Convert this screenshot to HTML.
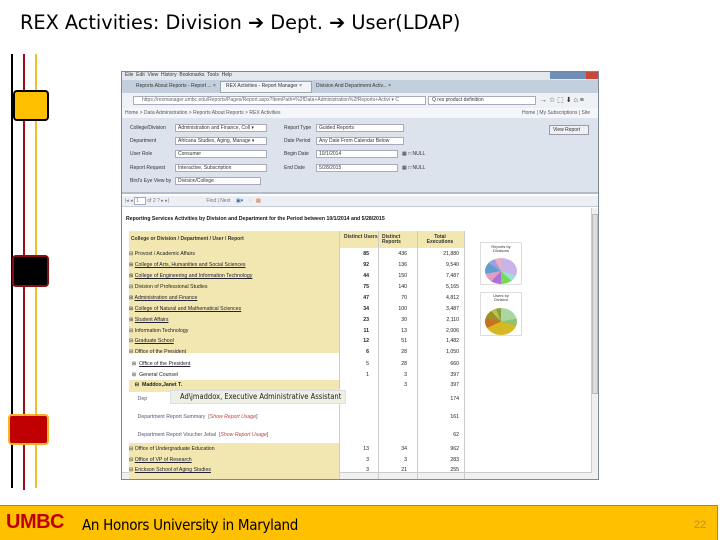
<!DOCTYPE html>
<html><head><meta charset="utf-8"><style>
*{margin:0;padding:0;box-sizing:border-box}
body{width:720px;height:540px;background:#fff;position:relative;overflow:hidden;font-family:"Liberation Sans",sans-serif}
.a{position:absolute}
.t{font-family:"DejaVu Sans","Liberation Sans",sans-serif;font-size:19.3px;color:#000;left:20px;top:11px;white-space:nowrap}
.s{font-size:5px;color:#333;white-space:nowrap;line-height:1}
.r{position:absolute;left:7px;width:335px;font-size:5.2px;line-height:1;color:#222;white-space:nowrap}
.r .n{position:absolute;text-align:right;width:30px}
.lk{color:#223;text-decoration:underline}
</style></head><body>
<div class="a t">REX Activities: Division ➔ Dept. ➔ User(LDAP)</div>
<div class="a" style="left:11px;top:54px;width:2px;height:434px;background:#000"></div>
<div class="a" style="left:23px;top:54px;width:2px;height:436px;background:#a00c14"></div>
<div class="a" style="left:35px;top:54px;width:2px;height:434px;background:#f0bf2c"></div>
<div class="a" style="left:13px;top:90px;width:36px;height:31px;background:#ffc000;border:2px solid #000;border-radius:4px"></div>
<div class="a" style="left:12px;top:255px;width:37px;height:32px;background:#000;border:2px solid #8a0b10;border-radius:4px"></div>
<div class="a" style="left:8px;top:414px;width:41px;height:31px;background:#c00000;border:2px solid #f7b32a;border-radius:4px"></div>
<div class="a" style="left:0;top:505px;width:718px;height:35px;background:#ffc000;border-top:1px solid #8a8a6a;border-right:1px solid #8a8a6a"></div>
<div class="a" style="left:6px;top:511px;font-size:20px;font-weight:bold;color:#c00000;font-family:'Liberation Sans Narrow','Liberation Sans',sans-serif;letter-spacing:-0.5px">UMBC</div>
<div class="a" style="left:82px;top:516px;font-size:15px;color:#000;font-family:'DejaVu Sans Condensed','Liberation Sans',sans-serif;letter-spacing:-0.3px">An Honors University in Maryland</div>
<div class="a" style="left:694px;top:519px;font-size:11px;color:#b09050">22</div>
<div class="a" style="left:121px;top:71px;width:478px;height:409px;background:#fff;border:1px solid #7a8898;overflow:hidden">
 <div class="a" style="left:0;top:0;width:478px;height:8px;background:#e4e8ee"></div>
 <div class="a s" style="left:3px;top:1px">Eile &nbsp;Edit &nbsp;View &nbsp;History &nbsp;Bookmarks &nbsp;Tools &nbsp;Help</div>
 <div class="a" style="left:428px;top:0;width:50px;height:7px;background:#6f8fb8"></div>
 <div class="a" style="left:464px;top:0;width:14px;height:7px;background:#c9483a"></div>
 <div class="a" style="left:0;top:8px;width:478px;height:13px;background:#c3cfdc"></div>
 <div class="a s" style="left:14px;top:12px">Reports About Reports - Report ... ×</div>
 <div class="a" style="left:98px;top:9px;width:92px;height:12px;background:#f2f4f7;border:1px solid #9aa"></div>
 <div class="a s" style="left:104px;top:12px">REX Activities - Report Manager ×</div>
 <div class="a s" style="left:194px;top:12px">Division And Department Activ... ×</div>
 <div class="a" style="left:0;top:21px;width:478px;height:15px;background:#eef1f5"></div>
 <div class="a" style="left:11px;top:24px;width:293px;height:9px;background:#fff;border:1px solid #aab"></div>
 <div class="a s" style="left:20px;top:26px;color:#666">https://rexmanager.umbc.edu/Reports/Pages/Report.aspx?ItemPath=%2fData+Administration%2fReports+Activi ▾ C</div>
 <div class="a" style="left:306px;top:24px;width:108px;height:9px;background:#fff;border:1px solid #aab"></div>
 <div class="a s" style="left:310px;top:26px">Q rex product definition</div>
 <div class="a s" style="left:418px;top:25px;font-size:7px">→ ☆ ⬚ ⬇ ⌂ ≡</div>
 <div class="a" style="left:0;top:36px;width:478px;height:10px;background:#f4f6f9"></div>
 <div class="a s" style="left:3px;top:39px;color:#556">Home &gt; Data Administration &gt; Reports About Reports &gt; REX Activities</div>
 <div class="a s" style="left:400px;top:39px;color:#556">Home | My Subscriptions | Site</div>
 <div class="a" style="left:0;top:46px;width:478px;height:76px;background:#dce3ed;border-bottom:2px solid #b0bccb"></div>
 <div class="a s" style="left:8px;top:54px">College/Division</div>
 <div class="a" style="left:53px;top:52px;width:92px;height:8px;background:#fff;border:1px solid #aab"></div><div class="a s" style="left:56px;top:54px">Administration and Finance, Coll ▾</div>
 <div class="a s" style="left:8px;top:67px">Department</div>
 <div class="a" style="left:53px;top:65px;width:92px;height:8px;background:#fff;border:1px solid #aab"></div><div class="a s" style="left:56px;top:67px">Africana Studies, Aging, Manage ▾</div>
 <div class="a s" style="left:8px;top:80px">User Role</div>
 <div class="a" style="left:53px;top:78px;width:92px;height:8px;background:#fff;border:1px solid #aab"></div><div class="a s" style="left:56px;top:80px">Consumer</div>
 <div class="a s" style="left:8px;top:94px">Report Request</div>
 <div class="a" style="left:53px;top:92px;width:92px;height:8px;background:#fff;border:1px solid #aab"></div><div class="a s" style="left:56px;top:94px">Interactive, Subscription</div>
 <div class="a s" style="left:8px;top:107px">Bird's Eye View by</div>
 <div class="a" style="left:53px;top:105px;width:86px;height:8px;background:#fff;border:1px solid #aab"></div><div class="a s" style="left:56px;top:107px">Division/College</div>
 <div class="a s" style="left:162px;top:54px">Report Type</div>
 <div class="a" style="left:194px;top:52px;width:88px;height:8px;background:#fff;border:1px solid #aab"></div><div class="a s" style="left:197px;top:54px">Guided Reports</div>
 <div class="a s" style="left:162px;top:67px">Date Period</div>
 <div class="a" style="left:194px;top:65px;width:88px;height:8px;background:#fff;border:1px solid #aab"></div><div class="a s" style="left:197px;top:67px">Any Date From Calendar Below</div>
 <div class="a s" style="left:162px;top:80px">Begin Date</div>
 <div class="a" style="left:194px;top:78px;width:82px;height:8px;background:#fff;border:1px solid #aab"></div><div class="a s" style="left:197px;top:80px">10/1/2014</div><div class="a s" style="left:280px;top:80px">▦ □ NULL</div>
 <div class="a s" style="left:162px;top:94px">End Date</div>
 <div class="a" style="left:194px;top:92px;width:82px;height:8px;background:#fff;border:1px solid #aab"></div><div class="a s" style="left:197px;top:94px">5/28/2015</div><div class="a s" style="left:280px;top:94px">▦ □ NULL</div>
 <div class="a" style="left:427px;top:53px;width:40px;height:10px;background:#eef0f3;border:1px solid #99a"></div><div class="a s" style="left:431px;top:56px">View Report</div>
 <div class="a" style="left:0;top:124px;width:478px;height:11px;background:#eceff3;border-bottom:1px solid #c5ccd6"></div>
 <div class="a s" style="left:3px;top:127px;color:#778">|◂ ◂ <span style="background:#fff;border:1px solid #aab;padding:0 6px 0 1px">1</span> of 2 ? ▸ ▸| &nbsp;&nbsp;&nbsp;&nbsp;&nbsp;&nbsp;&nbsp;&nbsp;&nbsp;&nbsp;&nbsp;&nbsp;&nbsp;&nbsp;&nbsp;&nbsp;&nbsp;&nbsp;&nbsp;&nbsp;&nbsp;&nbsp;&nbsp;&nbsp;&nbsp; Find | Next &nbsp;&nbsp; <span style="color:#36a">▣▾</span> &nbsp;&nbsp; <span style="color:#4a4">◌</span> &nbsp; <span style="color:#c40">▤</span></div>
 <div class="a" style="left:469px;top:136px;width:8px;height:272px;background:#f0f0f0;border-left:1px solid #ccc"></div>
 <div class="a" style="left:470px;top:142px;width:6px;height:180px;background:#dcdcdc;border:1px solid #bbb"></div>
 <div class="a" style="left:0;top:400px;width:470px;height:8px;background:#f0f0f0;border-top:1px solid #ccc"></div>
 <div class="a" style="left:8px;top:401px;width:150px;height:6px;background:#dcdcdc;border:1px solid #bbb"></div>
 <div class="a s" style="left:4px;top:145px;font-weight:bold;color:#111;font-size:5.2px">Reporting Services Activities by Division and Department for the Period between 10/1/2014 and 5/28/2015</div>
 <div class="a" style="left:7px;top:159px;width:335px;height:17px;background:#f2e7b0"></div>
 <div class="a s" style="left:9px;top:165px;font-weight:bold">College or Division / Department / User / Report</div>
 <div class="a s" style="left:222px;top:163px;font-weight:bold;text-align:center;width:20px">Distinct Users</div>
 <div class="a s" style="left:260px;top:163px;font-weight:bold">Distinct<br>Reports</div>
 <div class="a s" style="left:300px;top:163px;font-weight:bold;text-align:center;width:36px">Total<br>Executions</div>
 <div class="a" style="left:7px;top:176px;width:210px;height:105px;background:#f2e7b0"></div>
 <div class="a" style="left:7px;top:308px;width:210px;height:12px;background:#f2e7b0"></div>
 <div class="a" style="left:7px;top:371px;width:210px;height:37px;background:#f2e7b0"></div>
 <div class="a" style="left:217px;top:159px;width:1px;height:250px;background:#ccc"></div>
 <div class="a" style="left:256px;top:159px;width:1px;height:250px;background:#ccc"></div>
 <div class="a" style="left:295px;top:159px;width:1px;height:250px;background:#ccc"></div>
 <div class="a" style="left:342px;top:159px;width:1px;height:250px;background:#ccc"></div>
 <div class="r" style="top:180px">⊟ Provost / Academic Affairs<span class="n" style="left:210px;font-weight:bold">85</span><span class="n" style="left:248px">436</span><span class="n" style="left:300px">21,880</span></div>
 <div class="r" style="top:191px">⊞ <span class="lk">College of Arts, Humanities and Social Sciences</span><span class="n" style="left:210px;font-weight:bold">92</span><span class="n" style="left:248px">136</span><span class="n" style="left:300px">9,540</span></div>
 <div class="r" style="top:202px">⊞ <span class="lk">College of Engineering and Information Technology</span><span class="n" style="left:210px;font-weight:bold">44</span><span class="n" style="left:248px">150</span><span class="n" style="left:300px">7,487</span></div>
 <div class="r" style="top:213px">⊟ Division of Professional Studies<span class="n" style="left:210px;font-weight:bold">75</span><span class="n" style="left:248px">140</span><span class="n" style="left:300px">5,165</span></div>
 <div class="r" style="top:224px">⊞ <span class="lk">Administration and Finance</span><span class="n" style="left:210px;font-weight:bold">47</span><span class="n" style="left:248px">70</span><span class="n" style="left:300px">4,812</span></div>
 <div class="r" style="top:235px">⊞ <span class="lk">College of Natural and Mathematical Sciences</span><span class="n" style="left:210px;font-weight:bold">34</span><span class="n" style="left:248px">100</span><span class="n" style="left:300px">3,487</span></div>
 <div class="r" style="top:246px">⊞ <span class="lk">Student Affairs</span><span class="n" style="left:210px;font-weight:bold">23</span><span class="n" style="left:248px">30</span><span class="n" style="left:300px">2,110</span></div>
 <div class="r" style="top:257px">⊟ Information Technology<span class="n" style="left:210px;font-weight:bold">11</span><span class="n" style="left:248px">13</span><span class="n" style="left:300px">2,006</span></div>
 <div class="r" style="top:267px">⊟ <span class="lk">Graduate School</span><span class="n" style="left:210px;font-weight:bold">12</span><span class="n" style="left:248px">51</span><span class="n" style="left:300px">1,482</span></div>
 <div class="r" style="top:278px">⊟ Office of the President<span class="n" style="left:210px;font-weight:bold">6</span><span class="n" style="left:248px">28</span><span class="n" style="left:300px">1,050</span></div>
 <div class="r" style="top:290px">&nbsp;&nbsp;⊞ &nbsp;<span class="lk">Office of the President</span><span class="n" style="left:210px">5</span><span class="n" style="left:248px">28</span><span class="n" style="left:300px">660</span></div>
 <div class="r" style="top:301px">&nbsp;&nbsp;⊞ &nbsp;General Counsel<span class="n" style="left:210px">1</span><span class="n" style="left:248px">3</span><span class="n" style="left:300px">397</span></div>
 <div class="r" style="top:311px;font-weight:bold">&nbsp;&nbsp;&nbsp;&nbsp;⊟ &nbsp;Maddox,Janet T.<span class="n" style="left:248px;font-weight:normal">3</span><span class="n" style="left:300px;font-weight:normal">397</span></div>
 <div class="a" style="left:48px;top:318px;width:176px;height:14px;background:#eef0e4;border:1px solid #dde"></div>
 <div class="a" style="left:58px;top:320px;font-size:7.5px;color:#222;white-space:nowrap;font-family:'DejaVu Sans Condensed',sans-serif">Ad\jmaddox, Executive Administrative Assistant</div>
 <div class="r" style="top:325px;color:#557">&nbsp;&nbsp;&nbsp;&nbsp;&nbsp;&nbsp;Dep<span class="n" style="left:300px;color:#222">174</span></div>
 <div class="r" style="top:343px;color:#557">&nbsp;&nbsp;&nbsp;&nbsp;&nbsp;&nbsp;Department Report Summary &nbsp;[<i style="color:#b44">Show Report Usage</i>]<span class="n" style="left:300px;color:#222">161</span></div>
 <div class="r" style="top:361px;color:#557">&nbsp;&nbsp;&nbsp;&nbsp;&nbsp;&nbsp;Department Report Voucher Jebal &nbsp;[<i style="color:#b44">Show Report Usage</i>]<span class="n" style="left:300px;color:#222">62</span></div>
 <div class="r" style="top:375px">⊟ Office of Undergraduate Education<span class="n" style="left:210px">13</span><span class="n" style="left:248px">34</span><span class="n" style="left:300px">962</span></div>
 <div class="r" style="top:386px">⊟ <span class="lk">Office of VP of Research</span><span class="n" style="left:210px">3</span><span class="n" style="left:248px">3</span><span class="n" style="left:300px">283</span></div>
 <div class="r" style="top:396px">⊟ <span class="lk">Erickson School of Aging Studies</span><span class="n" style="left:210px">3</span><span class="n" style="left:248px">21</span><span class="n" style="left:300px">255</span></div>
 <div class="a" style="left:358px;top:170px;width:42px;height:43px;border:1px solid #ddd;background:#fff"></div>
 <div class="a s" style="left:362px;top:173px;font-size:4px;text-align:center;width:34px">Reports by<br>Divisions</div>
 <div class="a" style="left:363px;top:186px;width:32px;height:26px;border-radius:50%;background:conic-gradient(#c9b4e8 0 30%,#9de0d8 30% 37%,#78d858 37% 50%,#b070d8 50% 62%,#e0a0c0 62% 72%,#60a0d0 72% 84%,#a0a0e0 84% 92%,#e8b0c0 92%)"></div>
 <div class="a" style="left:358px;top:220px;width:42px;height:44px;border:1px solid #ddd;background:#fff"></div>
 <div class="a s" style="left:362px;top:222px;font-size:4px;text-align:center;width:34px">Users by<br>Division</div>
 <div class="a" style="left:363px;top:236px;width:32px;height:27px;border-radius:50%;background:conic-gradient(#a8d8a0 0 22%,#90c070 22% 30%,#d8b820 30% 68%,#c87020 68% 78%,#a09028 78% 88%,#c0c050 88% 94%,#88a040 94%)"></div>
</div>
</body></html>
